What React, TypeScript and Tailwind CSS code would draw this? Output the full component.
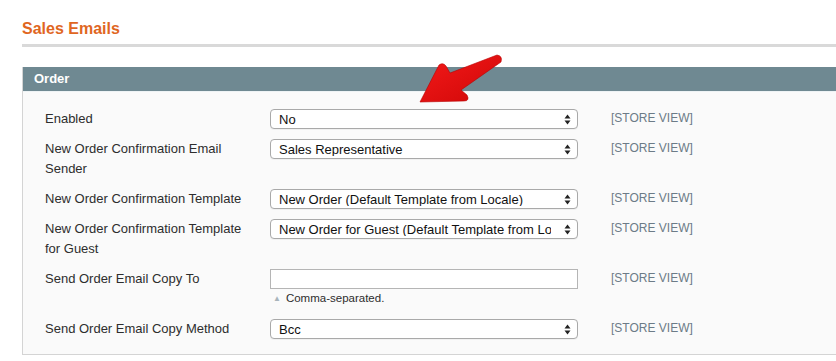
import React from 'react';

const font = { fontFamily: '"Liberation Sans", Arial, Helvetica, sans-serif' };

type Row = {
  label: string;
  kind: 'select' | 'input';
  value?: string;
  hint?: string;
};

const rows: Row[] = [
  { label: 'Enabled', kind: 'select', value: 'No' },
  { label: 'New Order Confirmation Email Sender', kind: 'select', value: 'Sales Representative' },
  { label: 'New Order Confirmation Template', kind: 'select', value: 'New Order (Default Template from Locale)' },
  { label: 'New Order Confirmation Template for Guest', kind: 'select', value: 'New Order for Guest (Default Template from Locale)' },
  { label: 'Send Order Email Copy To', kind: 'input', hint: 'Comma-separated.' },
  { label: 'Send Order Email Copy Method', kind: 'select', value: 'Bcc' },
];

function Arrows() {
  return (
    <svg width="7" height="11" viewBox="0 0 7 11" className="shrink-0">
      <path d="M3.5 0.5 L6.5 4.5 L0.5 4.5 Z" fill="#222" />
      <path d="M3.5 10.5 L6.5 6.5 L0.5 6.5 Z" fill="#222" />
    </svg>
  );
}

function FakeSelect({ value }: { value: string }) {
  return (
    <div className="flex h-[20px] w-[308px] items-center justify-between rounded-[4px] border border-[#a9a9a9] bg-white pl-[8px] pr-[6px] shadow-[0_1px_0_rgba(0,0,0,0.04)]">
      <span className="overflow-hidden whitespace-nowrap text-[13px] leading-none text-[#111]" style={{ maxWidth: 272 }}>
        {value}
      </span>
      <Arrows />
    </div>
  );
}

export default function App() {
  return (
    <div className="relative h-[361px] w-[836px] overflow-hidden bg-white" style={font}>
      <div className="pl-[22px] pt-[19px]">
        <h2 className="text-[16px] font-bold leading-[20px] text-[#e0661f]">Sales Emails</h2>
        <div className="mt-[5px] h-[3px] w-[900px] bg-[#d9d9d9]" />

        <div className="mt-[20px] w-[900px] border-b border-l border-[#d4d4d4] bg-[#fafafa]">
          <div className="flex h-[24px] items-center bg-[#6f8992] pl-[11px] text-[13px] font-bold text-white">Order</div>
          <div className="h-px bg-[#eef3f5]" />
          <div className="flex flex-col gap-[10px] pb-[15px] pl-[22px] pt-[17px]">
            {rows.map((row) => (
              <div key={row.label} className="flex items-start">
                <div className="w-[225px] pr-[15px] text-[13px] leading-[20px] text-[#2d2d2d]">{row.label}</div>
                <div className="w-[308px]">
                  {row.kind === 'select' ? (
                    <FakeSelect value={row.value || ''} />
                  ) : (
                    <>
                      <div className="h-[20px] w-[308px] border border-[#b5b5b5] bg-white" />
                      <div className="flex h-[20px] items-center gap-[5px] pl-[3px] text-[11.5px] text-[#2d2d2d]">
                        <span className="text-[8px] text-[#a8b4bb]">▲</span>
                        <span>{row.hint}</span>
                      </div>
                    </>
                  )}
                </div>
                <div className="pl-[33px] text-[12px] leading-[18px] text-[#6c7b87]">[STORE VIEW]</div>
              </div>
            ))}
          </div>
        </div>
      </div>

      {/* red callout arrow */}
      <svg className="pointer-events-none absolute left-0 top-0" width="836" height="361" viewBox="0 0 836 361">
        <defs>
          <linearGradient id="arrowFill" x1="0" y1="0" x2="1" y2="1">
            <stop offset="0" stopColor="#f41a1a" />
            <stop offset="1" stopColor="#cf0707" />
          </linearGradient>
        </defs>
        <path
          d="M420 102 L439 65 Q443 62 446 66 L450 73 L497 55 Q503 56 501 62 L461 90 L467 95 Q470 101 464 101 Z"
          fill="url(#arrowFill)"
          stroke="#b80000"
          strokeWidth="0.6"
          strokeLinejoin="round"
        />
      </svg>
    </div>
  );
}
